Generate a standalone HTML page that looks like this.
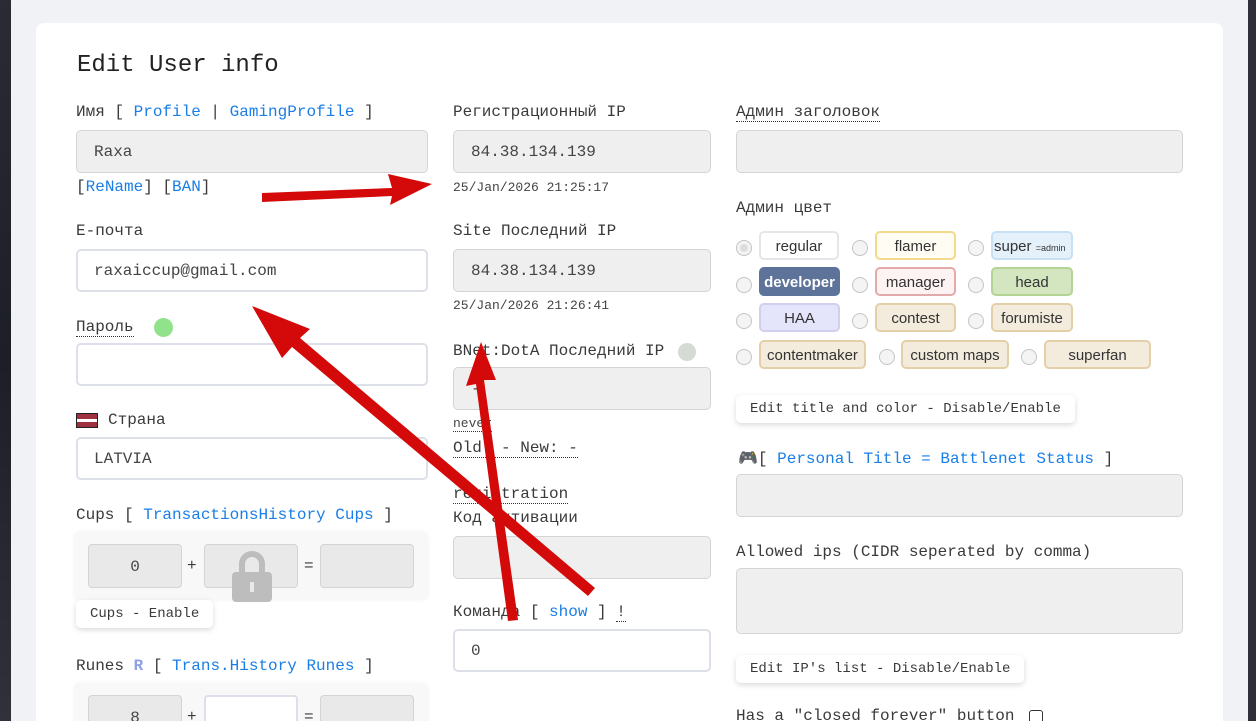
<!DOCTYPE html>
<html style="width:1256px;height:721px;overflow:hidden"><head><meta charset="utf-8"><style>
*{box-sizing:border-box;margin:0;padding:0}
body{width:1256px;height:721px;overflow:hidden;background:#f1f2f6;position:relative;font-family:"Liberation Mono","DejaVu Sans Mono",monospace;font-size:16px;color:#3a3a3a}
.dl{position:absolute;left:0;top:0;width:11px;height:721px;background:linear-gradient(#2a2b33,#1d1e26 50%,#30313a)}
.dr{position:absolute;left:1248px;top:0;width:8px;height:721px;background:#2e2f38}
.card{position:absolute;left:36px;top:23px;width:1187px;height:698px;background:#fff;border-radius:8px 8px 0 0}
.a{position:absolute;white-space:nowrap}
.l{color:#1a7ee6}
.in{position:absolute;height:43px;border:2px solid #dde0e8;border-radius:5px;background:#fff;padding-left:16px;line-height:41px;color:#444}
.ro{background:#efefef;border:1px solid #d4d4d4;line-height:43px;padding-left:17px}
.sm{font-size:13px;color:#444}
.dot{border-bottom:1px dotted #333}
.btn{position:absolute;height:28px;background:#fff;border-radius:5px;box-shadow:0 2px 6px rgba(0,0,0,.15);font-size:14px;line-height:28px;padding:0 14px;white-space:nowrap}
.r{position:absolute;width:16px;height:16px;border-radius:50%;border:1px solid #c4c4c4;background:#f4f4f4}
.t{position:absolute;height:29px;border:2px solid;border-radius:5px;font-family:"Liberation Sans",sans-serif;font-size:15px;text-align:center;line-height:27px;color:#333}
.tan{background:#f3ebdc;border-color:#e4d0a8}
.box{position:absolute;background:#f8f8f8;border-radius:6px;box-shadow:0 0 4px rgba(0,0,0,.05)}
.nb{position:absolute;height:44px;width:94px;background:#e9e9e9;border:1px solid #d4d4d4;border-radius:4px;text-align:center;line-height:44px;color:#444}
.lb{top:0}
</style></head><body>
<div class="dl"></div><div class="dr"></div>
<div class="card"></div>

<div class="a" style="left:77px;top:52px;font-size:24px;color:#222">Edit User info</div>

<!-- col1 -->
<div class="a" style="left:76px;top:103px">Имя [ <span class="l">Profile</span> | <span class="l">GamingProfile</span> ]</div>
<div class="in ro" style="left:76px;top:130px;width:352px">Raxa</div>
<div class="a" style="left:76px;top:178px">[<span class="l">ReName</span>] [<span class="l">BAN</span>]</div>
<div class="a" style="left:76px;top:222px">E-почта</div>
<div class="in" style="left:76px;top:249px;width:352px">raxaiccup@gmail.com</div>
<div class="a" style="left:76px;top:318px"><span class="dot">Пароль</span></div>
<div class="a" style="left:154px;top:318px;width:19px;height:19px;border-radius:50%;background:#90e38a"></div>
<div class="in" style="left:76px;top:343px;width:352px"></div>
<div class="a" style="left:76px;top:413px;width:22px;height:15px;border:1px solid #222;background:linear-gradient(#9e3040 40%,#fff 40%,#fff 60%,#9e3040 60%)"></div>
<div class="a" style="left:108px;top:411px">Страна</div>
<div class="in" style="left:76px;top:437px;width:352px;padding-left:16px">LATVIA</div>
<div class="a" style="left:76px;top:506px">Cups [ <span class="l">TransactionsHistory Cups</span> ]</div>
<div class="box" style="left:74px;top:532px;width:354px;height:68px"></div>
<div class="nb" style="left:88px;top:544px">0</div>
<div class="a" style="left:187px;top:557px">+</div>
<div class="nb" style="left:204px;top:544px"></div>
<div class="a" style="left:304px;top:557px">=</div>
<div class="nb" style="left:320px;top:544px"></div>
<svg class="a" style="left:230px;top:548px" width="44" height="56"><path d="M12 26V16a10 10 0 0 1 20 0v10" fill="none" stroke="#bdbdbd" stroke-width="6"/><rect x="2" y="24" width="40" height="30" rx="4" fill="#bdbdbd"/><rect x="20" y="34" width="4" height="10" fill="#e8e8e8"/></svg>
<div class="btn" style="left:76px;top:600px">Cups - Enable</div>
<div class="a" style="left:76px;top:657px">Runes <b style="color:#8ea0e6">R</b> [ <span class="l">Trans.History Runes</span> ]</div>
<div class="box" style="left:74px;top:683px;width:354px;height:60px"></div>
<div class="nb" style="left:88px;top:695px">8</div>
<div class="a" style="left:187px;top:708px">+</div>
<div class="nb" style="left:204px;top:695px;background:#fff;border:2px solid #dde0e8"></div>
<div class="a" style="left:304px;top:708px">=</div>
<div class="nb" style="left:320px;top:695px"></div>

<!-- col2 -->
<div class="a" style="left:453px;top:103px">Регистрационный IP</div>
<div class="in ro" style="left:453px;top:130px;width:258px">84.38.134.139</div>
<div class="a sm" style="left:453px;top:180px">25/Jan/2026 21:25:17</div>
<div class="a" style="left:453px;top:222px">Site Последний IP</div>
<div class="in ro" style="left:453px;top:249px;width:258px">84.38.134.139</div>
<div class="a sm" style="left:453px;top:298px">25/Jan/2026 21:26:41</div>
<div class="a" style="left:453px;top:342px">BNet:DotA Последний IP</div>
<div class="a" style="left:678px;top:343px;width:18px;height:18px;border-radius:50%;background:#d5dad5"></div>
<div class="in ro" style="left:453px;top:367px;width:258px">-</div>
<div class="a sm" style="left:453px;top:416px"><span class="dot">never</span></div>
<div class="a" style="left:453px;top:439px"><span class="dot">Old: - New: -</span></div>
<div class="a" style="left:453px;top:485px"><span class="dot">registration</span></div>
<div class="a" style="left:453px;top:509px">Код активации</div>
<div class="in ro" style="left:453px;top:536px;width:258px"></div>
<div class="a" style="left:453px;top:603px">Команда [ <span class="l">show</span> ] <span class="dot">!</span></div>
<div class="in" style="left:453px;top:629px;width:258px">0</div>

<!-- col3 -->
<div class="a" style="left:736px;top:103px"><span class="dot">Админ заголовок</span></div>
<div class="in ro" style="left:736px;top:130px;width:447px"></div>
<div class="a" style="left:736px;top:199px">Админ цвет</div>
<div class="r" style="left:736px;top:240px;background:#ddd;box-shadow:inset 0 0 0 3px #f4f4f4"></div>
<div class="t" style="left:759px;top:231px;width:80px;background:#fff;border-color:#e4e6ea">regular</div>
<div class="r" style="left:852px;top:240px"></div>
<div class="t" style="left:875px;top:231px;width:81px;background:#fffcf3;border-color:#f3d98a">flamer</div>
<div class="r" style="left:968px;top:240px"></div>
<div class="t" style="left:991px;top:231px;width:82px;background:#e4f0fa;border-color:#c8e0f4;text-align:left;padding-left:1px">super <span style="font-size:9px">=admin</span></div>
<div class="r" style="left:736px;top:277px"></div>
<div class="t" style="left:759px;top:267px;width:81px;background:#5d7399;border-color:#5d7399;color:#fff;font-weight:bold">developer</div>
<div class="r" style="left:852px;top:277px"></div>
<div class="t" style="left:875px;top:267px;width:81px;background:#fdf3f3;border-color:#e3aaaa">manager</div>
<div class="r" style="left:968px;top:277px"></div>
<div class="t" style="left:991px;top:267px;width:82px;background:#d3e6c0;border-color:#b3d494">head</div>
<div class="r" style="left:736px;top:313px"></div>
<div class="t" style="left:759px;top:303px;width:81px;background:#e4e4fa;border-color:#d0d0ee">HAA</div>
<div class="r" style="left:852px;top:313px"></div>
<div class="t tan" style="left:875px;top:303px;width:81px">contest</div>
<div class="r" style="left:968px;top:313px"></div>
<div class="t tan" style="left:991px;top:303px;width:82px">forumiste</div>
<div class="r" style="left:736px;top:349px"></div>
<div class="t tan" style="left:759px;top:340px;width:107px">contentmaker</div>
<div class="r" style="left:879px;top:349px"></div>
<div class="t tan" style="left:901px;top:340px;width:108px">custom maps</div>
<div class="r" style="left:1021px;top:349px"></div>
<div class="t tan" style="left:1044px;top:340px;width:107px">superfan</div>
<div class="btn" style="left:736px;top:395px">Edit title and color - Disable/Enable</div>
<div class="a" style="left:738px;top:448px"><span style="color:#6a3fb8">🎮</span>[ <span class="l">Personal Title = Battlenet Status</span> ]</div>
<div class="in ro" style="left:736px;top:474px;width:447px"></div>
<div class="a" style="left:736px;top:543px">Allowed ips (CIDR seperated by comma)</div>
<div class="in ro" style="left:736px;top:568px;width:447px;height:66px"></div>
<div class="btn" style="left:736px;top:655px">Edit IP's list - Disable/Enable</div>
<div class="a" style="left:736px;top:707px">Has a "closed forever" button</div>
<div class="a" style="left:1029px;top:710px;width:14px;height:14px;border:1px solid #333;border-radius:3px"></div>

<svg class="a" style="left:0;top:0" width="1256" height="721">
<g fill="#d40a0a">
<polygon points="262,193 392,188 388,174 432,184 390,205 392,196 262,202"/>
<polygon points="595,588 300,338 310,329 252,306 282,358 292,347 588,596"/>
<polygon points="518,620 484,380 496,380 481,342 466,386 476,384 508,621"/>
</g></svg>
</body></html>
